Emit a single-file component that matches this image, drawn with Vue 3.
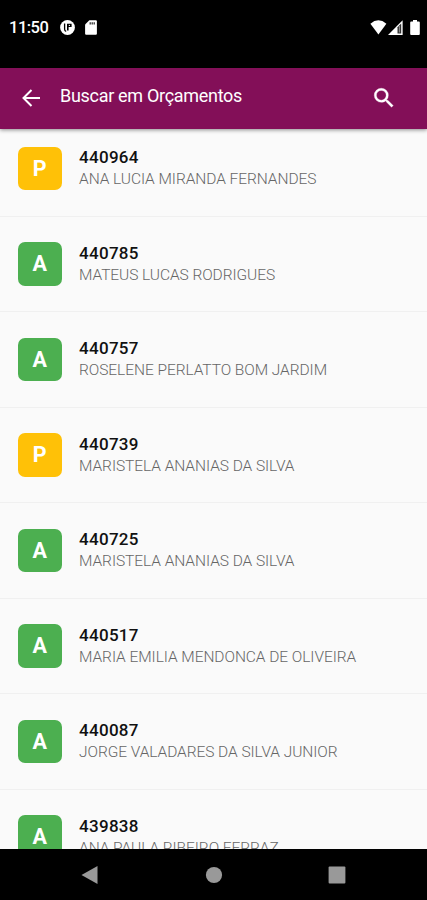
<script setup>
const budgets = [
  { status: 'P', number: '440964', customer: 'ANA LUCIA MIRANDA FERNANDES' },
  { status: 'A', number: '440785', customer: 'MATEUS LUCAS RODRIGUES' },
  { status: 'A', number: '440757', customer: 'ROSELENE PERLATTO BOM JARDIM' },
  { status: 'P', number: '440739', customer: 'MARISTELA ANANIAS DA SILVA' },
  { status: 'A', number: '440725', customer: 'MARISTELA ANANIAS DA SILVA' },
  { status: 'A', number: '440517', customer: 'MARIA EMILIA MENDONCA DE OLIVEIRA' },
  { status: 'A', number: '440087', customer: 'JORGE VALADARES DA SILVA JUNIOR' },
  { status: 'A', number: '439838', customer: 'ANA PAULA RIBEIRO FERRAZ' },
]
</script>

<template>
  <div class="phone">
    <div class="status-bar">
      <span class="clock">11:50</span>
      <svg class="app-icon" width="15" height="15" viewBox="0 0 15 15">
        <circle cx="7.5" cy="7.5" r="7.4" fill="#fff" />
        <path d="M4.6 3.4v5.8q0 1.8 1.6 2.2" fill="none" stroke="#000" stroke-width="1.3" />
        <path d="M7 10.6V3.8h4.6v3.1H8.6v3.7z" fill="#000" />
        <path d="M8.8 5.4h1.2" stroke="#fff" stroke-width="1" />
      </svg>
      <svg class="sd-icon" width="12" height="15" viewBox="0 0 12 15">
        <path d="M4.3 .3h6.6q1 0 1 1v12.4q0 1-1 1H1.1q-1 0-1-1V4.6z" fill="#fff" />
        <path d="M5.2 2.2v2.2M7.2 2.2v2.2M9.2 2.2v2.2" stroke="#222" stroke-width="1.2" />
      </svg>
      <span class="spacer"></span>
      <svg width="17" height="15" viewBox="0 0 17 15">
        <path d="M.4 3.7Q8.4-3 16.4 3.7L8.4 14.5z" fill="#fff" />
      </svg>
      <svg class="signal" width="15" height="15" viewBox="0 0 15 15">
        <path d="M0 15 14.6.3V15z" fill="#fff" />
        <path d="M9.5 7.2 13.2 3.4v10.2H9.5z" fill="#333" />
        <path d="M11.4 6v6.5" stroke="#aaa" stroke-width=".8" />
      </svg>
      <svg class="battery" width="10" height="15" viewBox="0 0 10 15">
        <path d="M3 0h4v1.6h1.8q1 0 1 1V14q0 1-1 1H1.2q-1 0-1-1V2.6q0-1 1-1H3z" fill="#fff" />
      </svg>
    </div>

    <header class="app-bar">
      <svg class="back" width="24" height="24" viewBox="0 0 24 24">
        <path d="M21 12H4.5M12.5 4 4.5 12l8 8" fill="none" stroke="#fff" stroke-width="2" />
      </svg>
      <h1>Buscar em Orçamentos</h1>
      <svg class="search" width="26" height="26" viewBox="0 0 24 24">
        <path d="M15.5 14h-.79l-.28-.27A6.47 6.47 0 0 0 16 9.5 6.5 6.5 0 1 0 9.5 16c1.61 0 3.09-.59 4.23-1.57l.27.28v.79l5 4.99L20.49 19l-4.99-5zm-6 0a4.5 4.5 0 1 1 0-9 4.5 4.5 0 0 1 0 9z" fill="#fff" stroke="#fff" stroke-width=".3" />
      </svg>
    </header>

    <main class="viewport">
      <ul class="list">
        <li v-for="b in budgets" :key="b.number" class="row">
          <span class="badge" :class="b.status === 'P' ? 'pending' : 'approved'">{{ b.status }}</span>
          <div class="info">
            <strong>{{ b.number }}</strong>
            <span class="customer">{{ b.customer }}</span>
          </div>
        </li>
      </ul>
    </main>

    <nav class="nav-bar">
      <svg width="18" height="20" viewBox="0 0 18 20"><path d="M.5 10 16.5 1v18z" fill="#999" /></svg>
      <svg width="18" height="18" viewBox="0 0 18 18"><circle cx="9" cy="9" r="8.1" fill="#999" /></svg>
      <svg width="18" height="18" viewBox="0 0 18 18"><rect x=".6" y=".6" width="16.8" height="16.8" rx="1" fill="#999" /></svg>
    </nav>
  </div>
</template>

<style>
body {
  margin: 0;
  background: #000;
}
</style>

<style scoped>
.phone {
  display: flex;
  flex-direction: column;
  width: 427px;
  height: 900px;
  overflow: hidden;
  background: #000;
  font-family: Roboto, sans-serif;
}
.status-bar {
  box-sizing: border-box;
  display: flex;
  align-items: flex-start;
  height: 67.5px;
  padding: 20px 7px 0 9px;
  flex: none;
}
.clock {
  width: 51px;
  color: #fff;
  font-size: 16.5px;
  font-weight: 500;
  line-height: 16px;
  letter-spacing: -0.5px;
}
.sd-icon {
  margin-left: 10px;
}
.spacer {
  flex: 1;
}
.signal {
  margin-left: 1px;
}
.battery {
  margin-left: 7px;
}
.app-bar {
  z-index: 1;
  box-sizing: border-box;
  display: flex;
  align-items: center;
  flex: none;
  height: 61px;
  padding: 0 30px 0 19px;
  background: #830f58;
  box-shadow: 0 1px 4px rgba(0, 0, 0, 0.45);
}
.app-bar h1 {
  flex: 1;
  margin: 0 0 5px 17px;
  color: #fff;
  font-size: 18px;
  font-weight: 400;
  line-height: 24px;
  letter-spacing: -0.3px;
}
.viewport {
  flex: 1;
  min-height: 0;
  overflow: hidden;
  background: #fafafa;
}
.list {
  margin: -7.5px 0 0;
  padding: 0;
  list-style: none;
}
.row {
  box-sizing: border-box;
  display: flex;
  align-items: center;
  height: 95.5px;
  padding-left: 18px;
  border-bottom: 1px solid #f0f0f0;
}
.badge {
  display: flex;
  align-items: center;
  justify-content: center;
  width: 43.5px;
  height: 43.5px;
  border-radius: 7px;
  color: #fff;
  font-size: 21.5px;
  font-weight: 700;
}
.pending {
  background: #ffc107;
}
.approved {
  background: #4caf50;
}
.info {
  display: flex;
  flex-direction: column;
  margin: 1px 0 0 17.5px;
}
.info strong {
  color: #111;
  font-size: 17px;
  font-weight: 500;
  line-height: 22px;
  letter-spacing: 0.3px;
}
.customer {
  color: #666;
  font-size: 15.5px;
  font-weight: 300;
  line-height: 23px;
  letter-spacing: -0.06px;
  white-space: nowrap;
}
.nav-bar {
  box-sizing: border-box;
  display: flex;
  align-items: center;
  justify-content: space-between;
  flex: none;
  height: 51px;
  padding: 0 81px;
}
</style>
